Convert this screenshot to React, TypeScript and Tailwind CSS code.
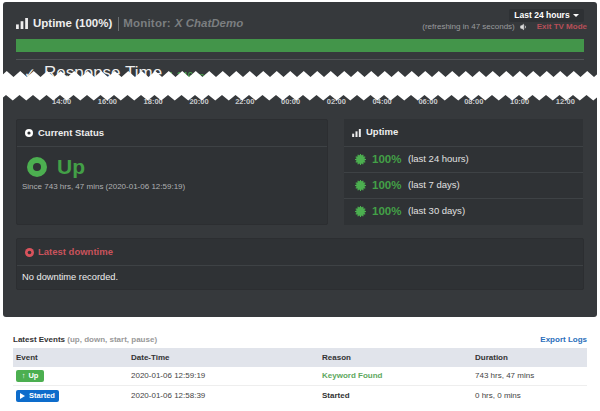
import { Volume1 } from "lucide-react";

const times = ["14:00", "16:00", "18:00", "20:00", "22:00", "00:00", "02:00", "04:00", "06:00", "08:00", "10:00", "12:00"];

function Bars({ className }: { className: string }) {
  return (
    <svg viewBox="0 0 13 12" className={className} fill="currentColor">
      <rect x="0" y="7" width="3" height="5" />
      <rect x="5" y="3.5" width="3" height="8.5" />
      <rect x="10" y="0" width="3" height="12" />
    </svg>
  );
}

function Dot({ className, hole }: { className: string; hole: string }) {
  return (
    <svg viewBox="0 0 20 20" className={className}>
      <circle cx="10" cy="10" r="10" fill="currentColor" />
      <circle cx="10" cy="10" r="4" fill={hole} />
    </svg>
  );
}

function Burst() {
  return (
    <svg viewBox="0 0 20 20" className="w-[11px] h-[11px] text-[#4caf50]" fill="currentColor">
      <circle cx="10" cy="10" r="8" />
      {[0, 30, 60, 90, 120, 150, 180, 210, 240, 270, 300, 330].map((a) => (
        <rect key={a} x="9" y="0" width="2" height="4" transform={`rotate(${a} 10 10)`} />
      ))}
    </svg>
  );
}

function TornEdge() {
  // white band where the screenshot was cut
  const step = 13.5;
  let upper = "M0 77";
  for (let x = 0; x < 600; x += step) upper += ` L${x + step / 2} 71 L${x + step} 77`;
  let lower = "L600 95";
  for (let x = 600; x > 0; x -= step) lower += ` L${x - step / 2} 100.5 L${x - step} 95`;
  return (
    <svg className="absolute left-0 top-0 w-[600px] h-[110px] pointer-events-none" viewBox="0 0 600 110">
      <path d={`${upper} ${lower} Z`} fill="#fff" />
    </svg>
  );
}

function Row({ label }: { label: string }) {
  return (
    <div className="h-[26px] flex items-center border-t border-[#3e4245] pl-[11px]">
      <Burst />
      <span className="ml-[6px] w-[29px] text-[11.5px] font-bold text-[#43a047]">100%</span>
      <span className="ml-[7px] text-[9.5px] text-[#e0e0e0]">({label})</span>
    </div>
  );
}

export default function App() {
  return (
    <div className="relative w-[600px] h-[411px] overflow-hidden bg-white font-['Liberation_Sans',sans-serif]">
      <div className="mx-[3px] mt-[2px] h-[315px] rounded-[3px] bg-[#36393c] px-[13px]">
        <div className="flex h-[37px] items-start justify-between">
          <div className="flex items-center pt-[13px]">
            <Bars className="w-[12px] h-[11px] text-[#eee]" />
            <span className="ml-[5px] text-[11.5px] font-bold text-[#eee]">Uptime (100%)</span>
            <span className="ml-[6px] h-[14px] border-l border-[#6a6e71]" />
            <span className="ml-[4px] text-[11.5px] font-bold tracking-[0.2px] text-[#7b7e80]">Monitor:</span>
            <span className="ml-[4px] text-[11.5px] font-bold italic text-[#7b7e80]">X ChatDemo</span>
          </div>
          <div className="-mr-[3px] flex flex-col items-end">
            <div className="mt-[7px] mr-[3px] flex h-[13px] w-[75px] items-center justify-center rounded-[2px] bg-[#2e3134] text-[8.5px] font-bold text-white">
              Last 24 hours
              <svg viewBox="0 0 8 4" className="ml-[3px] w-[6px] h-[3px]" fill="currentColor">
                <path d="M0 0 L8 0 L4 4 Z" />
              </svg>
            </div>
            <div className="flex items-center text-[8px] leading-[10px] text-[#9a9c9e]">
              <span>(refreshing in 47 seconds)</span>
              <Volume1 className="ml-[5px] w-[8px] h-[8px] text-[#ddd]" fill="currentColor" />
              <span className="ml-[9px] font-bold text-[#b84f58]">Exit TV Mode</span>
            </div>
          </div>
        </div>
        <div className="h-[13px] bg-[#43954a]" />
        <div className="mt-[7px] border-t border-[#505356]" />
        <div className="flex h-[38px] items-start overflow-hidden pl-[8px] pt-[2px] leading-[22px] text-[#eee]">
          <span className="w-[20px] text-[14px]">✓</span>
          <span className="text-[17px]">Response Time</span>
          <span className="ml-[6px] mt-[4px] text-[10px] text-[#4caf50]">1,146 ms</span>
        </div>
        <div className="flex justify-between pl-[36px] pr-[9px] text-[7.5px] font-bold leading-[8px] text-[#c8cacc]">
          {times.map((t) => (
            <span key={t}>{t}</span>
          ))}
        </div>
        <div className="mt-[13px] flex gap-[16px]">
          <div className="w-[312px] h-[106px] rounded-[2px] border border-[#2c2e31] bg-[#2f3235]">
            <div className="flex h-[27px] items-center border-b border-[#3e4245] pl-[8px] text-[9.5px] font-bold text-[#eee]">
              <Dot className="w-[8px] h-[8px] text-white" hole="#2f3235" />
              <span className="ml-[5px]">Current Status</span>
            </div>
            <div className="flex items-center pl-[10px] pt-[7px]">
              <Dot className="w-[20px] h-[20px] text-[#4caf50]" hole="#2f3235" />
              <span className="ml-[10px] text-[21px] leading-[26px] font-bold text-[#43a047]">Up</span>
            </div>
            <div className="pl-[5px] pt-[1px] text-[8px] text-[#aeb0b2]">Since 743 hrs, 47 mins (2020-01-06 12:59:19)</div>
          </div>
          <div className="w-[239px] h-[106px] bg-[#2f3235]">
            <div className="flex h-[27px] items-center pl-[8px] text-[9.5px] font-bold text-[#eee]">
              <Bars className="w-[9px] h-[8px] text-[#eee]" />
              <span className="ml-[5px]">Uptime</span>
            </div>
            <Row label="last 24 hours" />
            <Row label="last 7 days" />
            <Row label="last 30 days" />
          </div>
        </div>
        <div className="mt-[13px] h-[52px] rounded-[2px] border border-[#2c2e31] bg-[#2f3235]">
          <div className="flex h-[27px] items-center border-b border-[#3e4245] pl-[8px] text-[9.5px] font-bold text-[#c9535c]">
            <Dot className="w-[9px] h-[9px] text-[#d9535c]" hole="#2f3235" />
            <span className="ml-[4px]">Latest downtime</span>
          </div>
          <div className="pl-[5px] pt-[5px] text-[9.3px] text-[#eee]">No downtime recorded.</div>
        </div>
      </div>
      <div className="mx-[13px] mt-[16px] flex h-[13px] items-center justify-between text-[8px] font-bold">
        <div>
          <span className="text-[#333]">Latest Events</span> <span className="text-[#999]">(up, down, start, pause)</span>
        </div>
        <span className="text-[#2a6ebb]">Export Logs</span>
      </div>
      <div className="mx-[13px] mt-[2px] text-[8px] text-[#444]">
        <div className="flex h-[19px] items-center bg-[#e1e4eb] font-bold text-[#333]">
          <span className="w-[118px] pl-[3px]">Event</span>
          <span className="w-[191px]">Date-Time</span>
          <span className="w-[153px]">Reason</span>
          <span>Duration</span>
        </div>
        <div className="flex h-[19px] items-center border-b border-[#eee]">
          <span className="w-[118px] pl-[3px]">
            <span className="flex h-[12px] w-[28px] items-center justify-center gap-[3px] rounded-[2px] bg-[#4caf50] text-[7.5px] font-bold text-white">
              <span>↑</span>
              <span>Up</span>
            </span>
          </span>
          <span className="w-[191px]">2020-01-06 12:59:19</span>
          <span className="w-[153px] font-bold text-[#5ea860]">Keyword Found</span>
          <span>743 hrs, 47 mins</span>
        </div>
        <div className="flex h-[19px] items-center">
          <span className="w-[118px] pl-[3px]">
            <span className="flex h-[12px] w-[43px] items-center justify-center gap-[4px] rounded-[2px] bg-[#0d6ccb] text-[7.5px] font-bold text-white">
              <svg viewBox="0 0 6 7" className="w-[5px] h-[6px]" fill="currentColor">
                <path d="M0 0 L6 3.5 L0 7 Z" />
              </svg>
              <span>Started</span>
            </span>
          </span>
          <span className="w-[191px]">2020-01-06 12:58:39</span>
          <span className="w-[153px] font-bold text-[#333]">Started</span>
          <span>0 hrs, 0 mins</span>
        </div>
      </div>
      <TornEdge />
    </div>
  );
}
